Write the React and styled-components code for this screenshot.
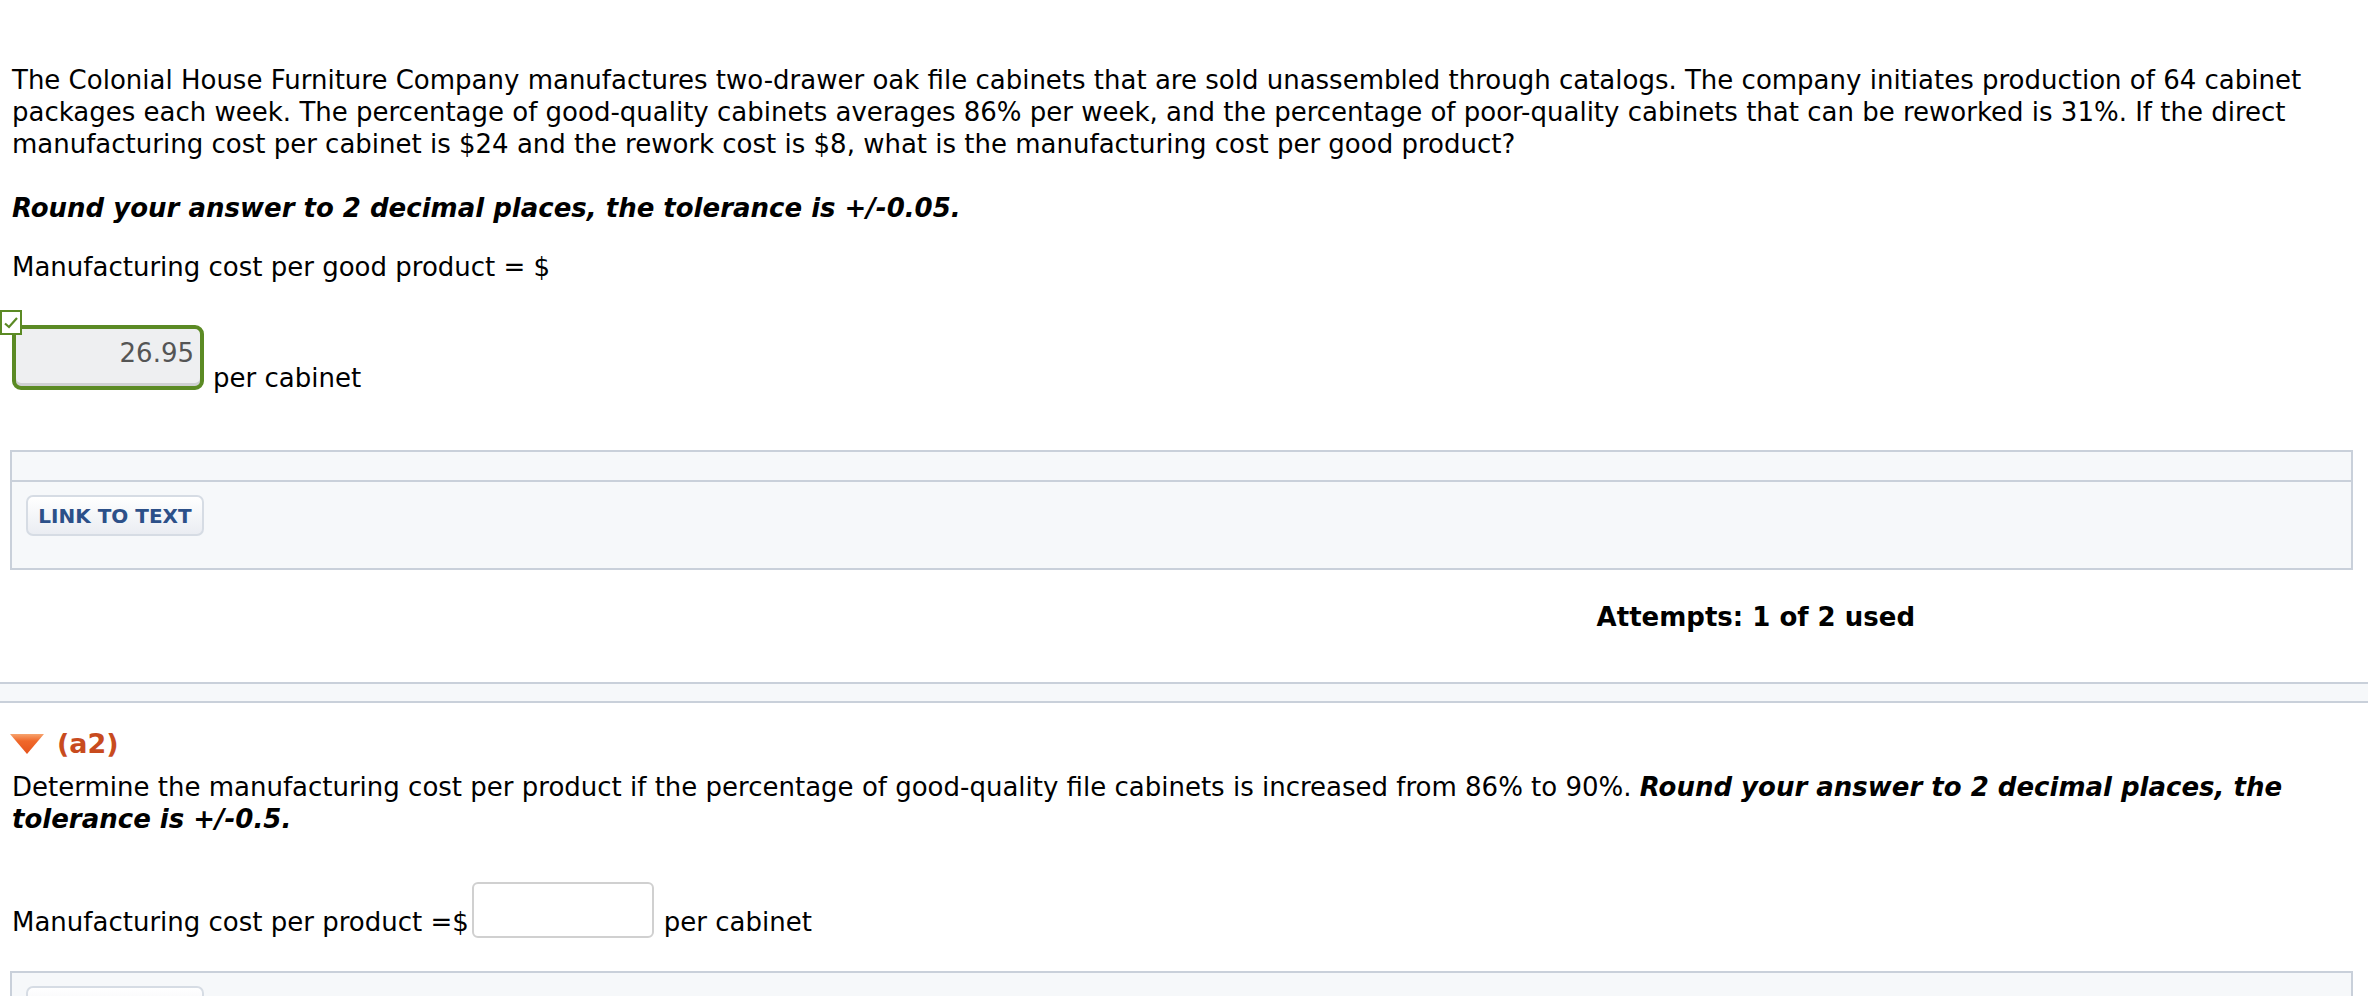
import React from 'react';
import styled, { createGlobalStyle } from 'styled-components';

const GlobalStyle = createGlobalStyle`
    html, body {
        margin: 0;
        padding: 0;
        background: #fff;
        overflow: hidden;
    }
    body {
        font-family: "DejaVu Sans", Verdana, sans-serif;
        font-size: 26px;
        line-height: 32px;
        color: #000;
    }
`;

const Section = styled.div`
    padding: ${props => props.top || 0}px 15px 0 10px;
`;

const Text = styled.p`
    margin: ${props => props.gap || 0}px 0 0 2px;
`;

const Strong = styled.b`
    font-style: italic;
    font-weight: 700;
`;

const AnswerRow = styled.div`
    display: flex;
    align-items: flex-end;
    margin-top: ${props => props.gap || 0}px;
    margin-left: 2px;
`;

const FieldWrap = styled.span`
    position: relative;
    display: inline-block;
`;

const CheckBadge = styled.span`
    position: absolute;
    left: -12px;
    top: -15px;
    width: 18px;
    height: 21px;
    border: 2px solid #5b8a24;
    background: #fff;
    display: flex;
    align-items: center;
    justify-content: center;
`;

const ResultField = styled.div`
    box-sizing: border-box;
    width: 192px;
    height: 65px;
    border: 4px solid #5b8a24;
    border-radius: 9px;
    background: #eeeff1;
    box-shadow: inset 0 -3px 0 #cfd0d3;
    color: #555;
    text-align: right;
    padding: 4px 6px 0 0;
    line-height: 40px;
`;

const EmptyField = styled.div`
    box-sizing: border-box;
    width: 182px;
    height: 56px;
    border: 2px solid #d0d0d0;
    border-radius: 6px;
    background: #fff;
    margin: 0 10px 0 3px;
`;

const Unit = styled.span`
    margin-left: ${props => props.offset || 0}px;
    margin-bottom: ${props => props.lift || 0}px;
`;

const Panel = styled.div`
    margin-top: ${props => props.gap || 0}px;
    border: 2px solid #c9d0da;
    background: #f6f8fa;
`;

const PanelHead = styled.div`
    height: 28px;
    border-bottom: 2px solid #c9d0da;
`;

const PanelBody = styled.div`
    padding: 13px 14px 32px;
`;

const LinkButton = styled.button`
    box-sizing: border-box;
    width: 178px;
    height: 41px;
    border: 2px solid #d6dce4;
    border-radius: 7px;
    background: linear-gradient(#ffffff, #eaedf2);
    color: #2c5089;
    font-family: "DejaVu Sans", Verdana, sans-serif;
    font-size: 20px;
    font-weight: 700;
    padding: 0;
`;

const Attempts = styled.div`
    margin-top: 31px;
    padding-right: 438px;
    text-align: right;
    font-weight: 700;
`;

const Band = styled.div`
    margin-top: 49px;
    height: 17px;
    border-top: 2px solid #c9d0da;
    border-bottom: 2px solid #c9d0da;
    background: #f6f8fa;
`;

const PartTitle = styled.div`
    display: flex;
    align-items: center;
    gap: 13px;
    color: #c84b1e;
    font-weight: 700;
    font-size: 27px;
`;

const CheckIcon = () => (
    <svg width="16" height="14" viewBox="0 0 16 14">
        <path d="M2 7.5 L6 11 L14 2" fill="none" stroke="#5b8a24" strokeWidth="2.2" />
    </svg>
);

const Caret = () => (
    <svg width="34" height="20" viewBox="0 0 34 20">
        <defs>
            <linearGradient id="caretFill" x1="0" y1="0" x2="0" y2="1">
                <stop offset="0" stopColor="#f7a46e" />
                <stop offset="0.35" stopColor="#f0682a" />
                <stop offset="1" stopColor="#e5531c" />
            </linearGradient>
        </defs>
        <path d="M0 0 H34 L17 20 Z" fill="url(#caretFill)" />
    </svg>
);

export default function App() {
    return (
        <>
            <GlobalStyle />
            <Section top={64}>
                <Text>
                    The Colonial House Furniture Company manufactures two-drawer oak file cabinets that are sold
                    unassembled through catalogs. The company initiates production of 64 cabinet packages each week.
                    The percentage of good-quality cabinets averages 86% per week, and the percentage of poor-quality
                    cabinets that can be reworked is 31%. If the direct manufacturing cost per cabinet is $24 and the
                    rework cost is $8, what is the manufacturing cost per good product?
                </Text>
                <Text gap={32}>
                    <Strong>Round your answer to 2 decimal places, the tolerance is +/-0.05.</Strong>
                </Text>
                <Text gap={27}>Manufacturing cost per good product = $</Text>
                <AnswerRow gap={42}>
                    <FieldWrap>
                        <CheckBadge>
                            <CheckIcon />
                        </CheckBadge>
                        <ResultField>26.95</ResultField>
                    </FieldWrap>
                    <Unit offset={9} lift={-4}>per cabinet</Unit>
                </AnswerRow>
                <Panel gap={60}>
                    <PanelHead />
                    <PanelBody>
                        <LinkButton>LINK TO TEXT</LinkButton>
                    </PanelBody>
                </Panel>
                <Attempts>Attempts: 1 of 2 used</Attempts>
            </Section>
            <Band />
            <Section top={25}>
                <PartTitle>
                    <Caret />
                    <span>(a2)</span>
                </PartTitle>
                <Text gap={11}>
                    Determine the manufacturing cost per product if the percentage of good-quality file cabinets is
                    increased from 86% to 90%.{' '}
                    <Strong>Round your answer to 2 decimal places, the tolerance is +/-0.5.</Strong>
                </Text>
                <AnswerRow gap={47}>
                    <span>Manufacturing cost per product =$</span>
                    <EmptyField />
                    <span>per cabinet</span>
                </AnswerRow>
                <Panel gap={33}>
                    <PanelBody>
                        <LinkButton>LINK TO TEXT</LinkButton>
                    </PanelBody>
                </Panel>
            </Section>
        </>
    );
}
